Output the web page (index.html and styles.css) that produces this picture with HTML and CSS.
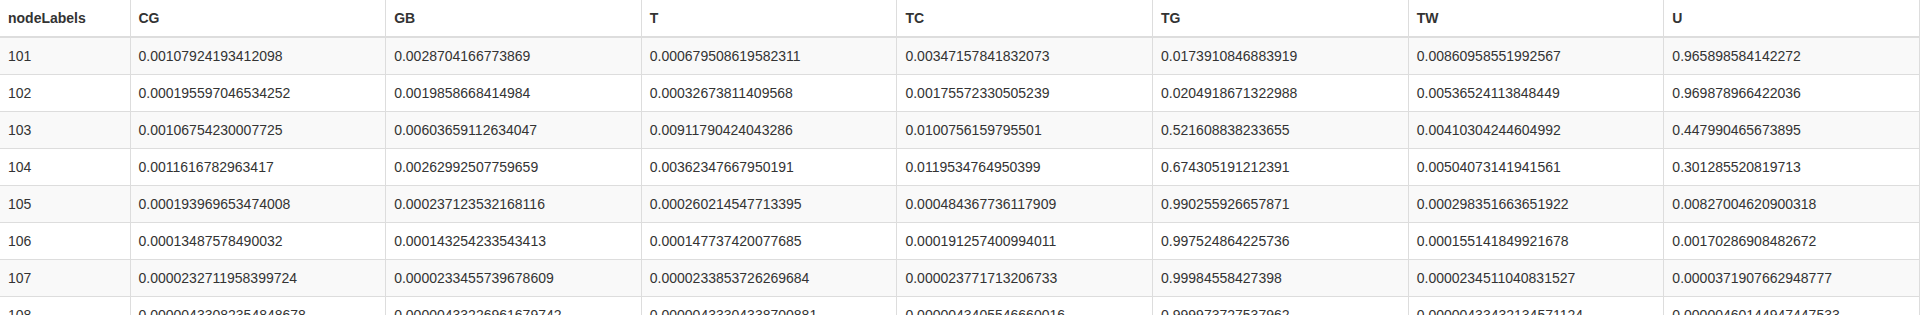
FILE: index.html
```html
<!DOCTYPE html>
<html lang="en">
<head>
<meta charset="utf-8">
<title>nodeLabels table</title>
<link rel="stylesheet" href="styles.css">
</head>
<body>
<table class="data-table">
  <colgroup>
    <col class="col-label">
    <col><col><col><col><col><col><col>
  </colgroup>
  <thead>
    <tr>
      <th>nodeLabels</th><th>CG</th><th>GB</th><th>T</th><th>TC</th><th>TG</th><th>TW</th><th>U</th>
    </tr>
  </thead>
  <tbody>
    <tr><td>101</td><td>0.00107924193412098</td><td>0.0028704166773869</td><td>0.000679508619582311</td><td>0.00347157841832073</td><td>0.0173910846883919</td><td>0.00860958551992567</td><td>0.965898584142272</td></tr>
    <tr><td>102</td><td>0.000195597046534252</td><td>0.0019858668414984</td><td>0.00032673811409568</td><td>0.00175572330505239</td><td>0.0204918671322988</td><td>0.00536524113848449</td><td>0.969878966422036</td></tr>
    <tr><td>103</td><td>0.00106754230007725</td><td>0.00603659112634047</td><td>0.00911790424043286</td><td>0.0100756159795501</td><td>0.521608838233655</td><td>0.00410304244604992</td><td>0.447990465673895</td></tr>
    <tr><td>104</td><td>0.0011616782963417</td><td>0.00262992507759659</td><td>0.00362347667950191</td><td>0.0119534764950399</td><td>0.674305191212391</td><td>0.00504073141941561</td><td>0.301285520819713</td></tr>
    <tr><td>105</td><td>0.000193969653474008</td><td>0.000237123532168116</td><td>0.000260214547713395</td><td>0.000484367736117909</td><td>0.990255926657871</td><td>0.000298351663651922</td><td>0.00827004620900318</td></tr>
    <tr><td>106</td><td>0.00013487578490032</td><td>0.000143254233543413</td><td>0.000147737420077685</td><td>0.000191257400994011</td><td>0.997524864225736</td><td>0.000155141849921678</td><td>0.00170286908482672</td></tr>
    <tr><td>107</td><td>0.0000232711958399724</td><td>0.0000233455739678609</td><td>0.0000233853726269684</td><td>0.000023771713206733</td><td>0.99984558427398</td><td>0.0000234511040831527</td><td>0.0000371907662948777</td></tr>
    <tr><td>108</td><td>0.00000433082354848678</td><td>0.00000433226961679742</td><td>0.00000433304338700881</td><td>0.0000043405546660016</td><td>0.999973727537962</td><td>0.00000433432134571124</td><td>0.00000460144947447533</td></tr>
  </tbody>
</table>
</body>
</html>
```

FILE: styles.css
```css
html {
  overflow: hidden;
}

body {
  margin: 0;
  background: #fff;
  font-family: "Liberation Sans", Arial, Helvetica, sans-serif;
  font-size: 14px;
  line-height: 20px;
  color: #333;
}

.data-table {
  width: 1920px;
  table-layout: fixed;
  border-collapse: collapse;
  border-spacing: 0;
  border: none;
}

.data-table .col-label {
  width: 130px;
}

.data-table th,
.data-table td {
  padding: 8px;
  text-align: left;
  vertical-align: top;
  border: 1px solid #ddd;
  white-space: nowrap;
  overflow: hidden;
}

.data-table th {
  font-weight: bold;
  border-top: none;
  border-bottom: 2px solid #ddd;
  vertical-align: bottom;
}

.data-table th:first-child,
.data-table td:first-child {
  border-left: none;
}

.data-table tbody tr:nth-child(odd) {
  background: #f9f9f9;
}
```
